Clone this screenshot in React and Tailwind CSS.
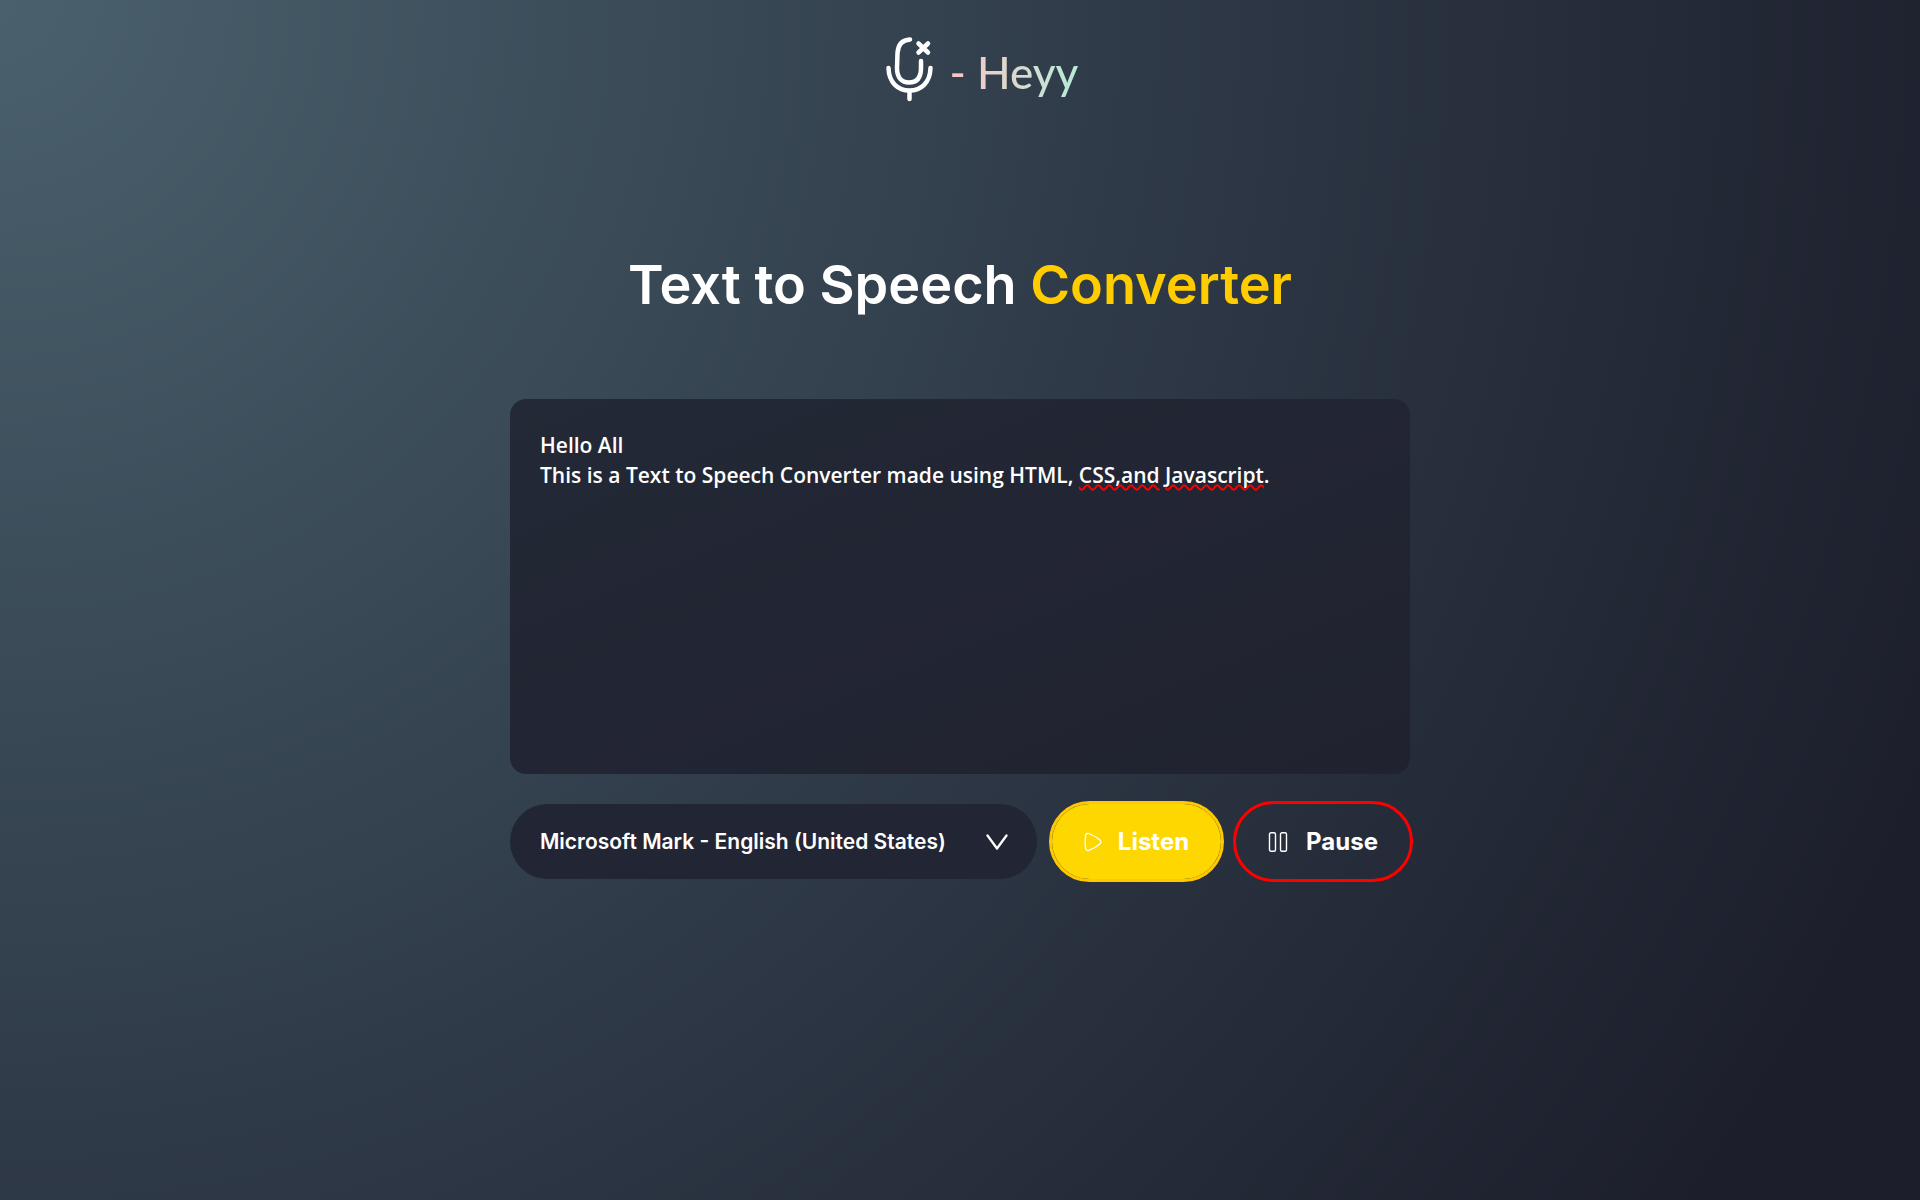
const lines = ["Hello All", "This is a Text to Speech Converter made using HTML, CSS,and Javascript."];

function MicLogo() {
  return (
    <svg viewBox="0 0 48 66" className="h-[66px] w-12" fill="none" stroke="#fff" strokeWidth="4.500" strokeLinecap="round" aria-hidden="true">
      <path d="M24 2.500C16 3 12 8 11.500 16L11 31C11 41 16 45.500 23 45.500C31 45.500 35 41 35 31V24" />
      <path d="M2.500 31C3 46 12 53.500 23.500 53.500C35 53.500 44 46 44.500 31" />
      <path d="M23.500 54V62M32.500 6.500L42 15.500M42 6.500L32.500 15.500" />
    </svg>
  );
}

export default function App() {
  return (
    <div className="flex min-h-screen flex-col items-center bg-[radial-gradient(circle_at_top_left,#4a616d,#2d3745_54%,#1c1e2b_92%)] px-6 font-['Inter',sans-serif] text-white">
      <header className="flex h-[140px] items-center gap-4 pl-11">
        <MicLogo />
        <p className="bg-linear-to-r from-[#f8c4c4] to-[#b4ecd8] bg-clip-text pt-1 font-['Lato',sans-serif] text-[44px] leading-[66px] font-medium text-transparent">- Heyy</p>
      </header>
      <main className="flex w-full max-w-[900px] flex-col">
        <h1 className="mt-[105px] text-center text-[54px] leading-[80px] font-semibold">
          Text to Speech <span className="text-[#ffcc00]">Converter</span>
        </h1>
        <div className="mt-[74px] grid h-[375px] rounded-2xl bg-linear-to-br from-[#232936] via-[#222533] to-[#20222f] font-['Open_Sans',sans-serif] text-[21px] leading-[30px] font-semibold">
          <textarea aria-label="Text to speak" spellCheck="false" defaultValue={lines.join("\n")} className="col-start-1 row-start-1 resize-none rounded-2xl bg-transparent px-[30px] py-[31px] outline-none" />
          <div aria-hidden="true" className="pointer-events-none col-start-1 row-start-1 px-[30px] py-[31px] whitespace-pre-wrap text-transparent">
            {"\u00a0\nThis is a Text to Speech Converter made using HTML, "}
            <span className="underline decoration-[#f00] decoration-wavy decoration-2 [text-decoration-skip-ink:none]">CSS,and</span>{" "}
            <span className="underline decoration-[#f00] decoration-wavy decoration-2 [text-decoration-skip-ink:none]">Javascript</span>
          </div>
        </div>
        <div className="-mr-[3px] mt-[27px] flex items-center">
          <div className="relative mr-3 flex-1">
            <select aria-label="Voice" className="h-[75px] w-full appearance-none rounded-[38px] bg-[#222533] pr-16 pl-[30px] text-[21px] font-semibold outline-none">
              <option>Microsoft Mark - English (United States)</option>
            </select>
            <svg viewBox="0 0 22 16" className="pointer-events-none absolute top-[30px] right-[29px] h-4 w-[22px]" fill="none" stroke="#fff" strokeWidth="2.300" strokeLinecap="round" strokeLinejoin="round" aria-hidden="true">
              <path d="M1.500 1.500L11 14.500L20.500 1.500" />
            </svg>
          </div>
          <button className="mr-[9px] flex h-[81px] w-[175px] items-center justify-center gap-4 rounded-[41px] border-[3px] border-[#ffc800] bg-[#ffd700] bg-clip-padding text-[24px] font-bold">
            <svg viewBox="0 0 18 20" className="h-5 w-[18px]" fill="none" stroke="#fff" strokeWidth="1.300" strokeLinejoin="round" aria-hidden="true">
              <path d="M4.500 1.500C3 1 2 1.700 1.700 3.300C1 7.500 1 12.500 1.700 16.500C2 18.300 3.200 18.900 4.800 18.400C8.800 17 12.700 14.800 15.800 12C17.300 10.600 17.300 9.200 15.800 7.900C12.700 5.200 8.700 3 4.500 1.500Z" />
            </svg>
            Listen
          </button>
          <button className="flex h-[81px] w-[180px] items-center justify-center gap-[18px] rounded-[41px] border-[3px] border-[#f00] text-[24px] font-bold">
            <svg viewBox="0 0 20 20" className="size-5" fill="none" stroke="#fff" strokeWidth="1.400" aria-hidden="true">
              <rect x="1.500" y="0.800" width="6" height="18.400" rx="1.500" />
              <rect x="12.500" y="0.800" width="6" height="18.400" rx="1.500" />
            </svg>
            Pause
          </button>
        </div>
      </main>
    </div>
  );
}
